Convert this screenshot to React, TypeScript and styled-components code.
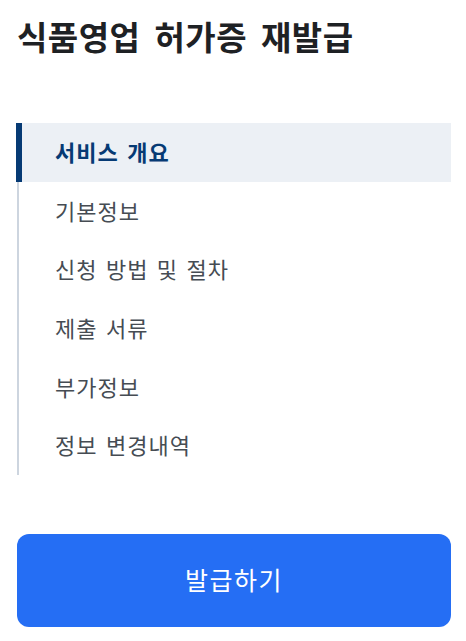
import React from "react";
import styled, { createGlobalStyle } from "styled-components";

const GlobalStyle = createGlobalStyle`
  html, body {
    margin: 0;
    padding: 0;
    background: #ffffff;
  }
  body {
    font-family: "Noto Sans CJK KR", "Noto Sans", sans-serif;
    color: #1e2124;
  }
  * {
    box-sizing: border-box;
  }
`;

const menu = [
  "서비스 개요",
  "기본정보",
  "신청 방법 및 절차",
  "제출 서류",
  "부가정보",
  "정보 변경내역",
];

const App = () => {
  return (
    <>
      <GlobalStyle />
      <STPage>
        <STTitle>식품영업 허가증 재발급</STTitle>
        <STNav>
          {menu.map((label, i) => (
            <STNavItem key={label} $active={i === 0}>
              {label}
            </STNavItem>
          ))}
        </STNav>
        <STIssueButton type="button">발급하기</STIssueButton>
      </STPage>
    </>
  );
};

const STPage = styled.div`
  width: 466px;
  display: flex;
  flex-direction: column;
  padding: 0 15px 0 16px;
`;

const STTitle = styled.h1`
  margin: 0;
  padding: 15px 0 0 1px;
  height: 123px;
  font-size: 33px;
  font-weight: 700;
  line-height: 42px;
  letter-spacing: 0.5px;
  word-spacing: 6px;
  color: #1e2124;
`;

const STNav = styled.ul`
  list-style: none;
  margin: 0;
  padding: 0;
  display: flex;
  flex-direction: column;
`;

const STNavItem = styled.li<{ $active?: boolean }>`
  height: 58.7px;
  display: flex;
  align-items: center;
  margin-left: ${(p) => (p.$active ? 0 : 1)}px;
  padding: 0 0 3px ${(p) => (p.$active ? 33 : 36)}px;
  border-left: ${(p) => (p.$active ? "6px solid #063a74" : "2px solid #cdd5df")};
  background: ${(p) => (p.$active ? "#ecf0f5" : "transparent")};
  color: ${(p) => (p.$active ? "#063a74" : "#464c53")};
  font-size: 22px;
  font-weight: ${(p) => (p.$active ? 700 : 400)};
  letter-spacing: 1px;
  word-spacing: 2.5px;
`;

const STIssueButton = styled.button`
  margin: 59px 0 0 1px;
  height: 93px;
  padding: 0 0 3px;
  border: none;
  border-radius: 12px;
  background: #256ef4;
  color: #ffffff;
  font-family: "Noto Sans CJK KR", "Noto Sans", sans-serif;
  font-size: 25px;
  font-weight: 400;
  letter-spacing: 1.5px;
  cursor: pointer;
`;

export default App;
